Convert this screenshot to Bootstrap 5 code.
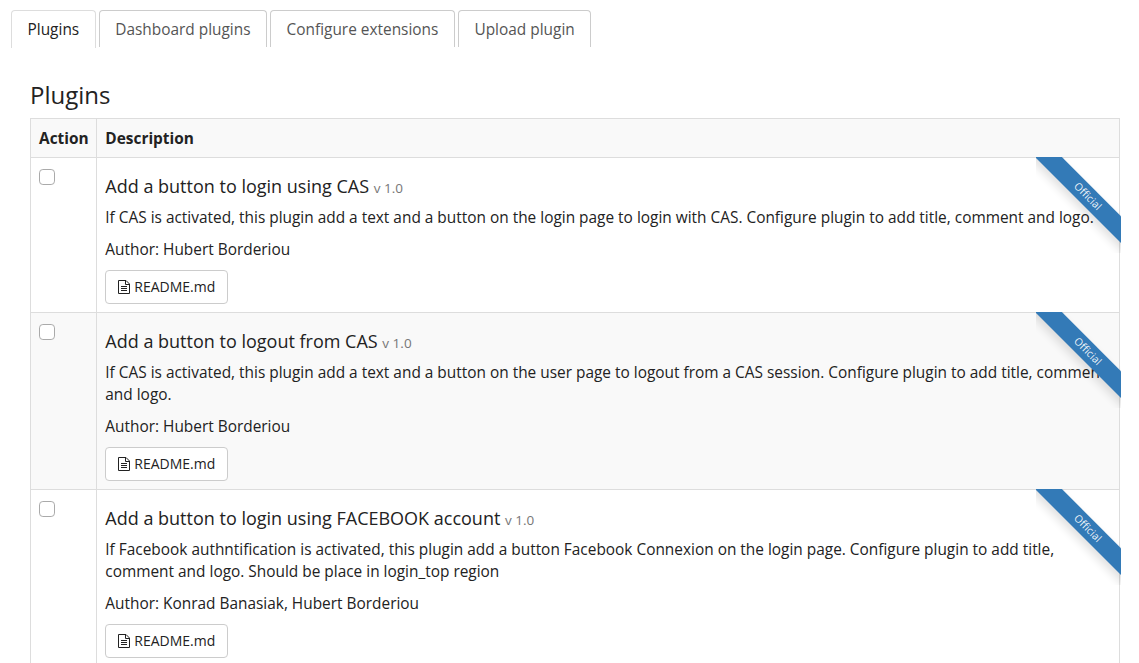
<!DOCTYPE html>
<html lang="en">
<head>
<meta charset="utf-8">
<title>Plugins</title>
<link href="https://cdn.jsdelivr.net/npm/bootstrap@5.3.0/dist/css/bootstrap.min.css" rel="stylesheet">
<style>
body{font:400 15.41px/22px "Open Sans","Noto Sans",sans-serif;color:#222;background:#fff;overflow:hidden}
.plugin-tabs{padding:10px 0 0 11px;gap:3px;border:0}
.plugin-tabs .nav-link,.plugin-tabs .nav-link:hover{margin:0;height:37px;padding:8px 15.53px 0;border:1px solid #ccc;border-bottom:0;border-radius:4px 4px 0 0;color:#555;line-height:22px;white-space:nowrap}
.plugin-tabs .nav-link.active{height:38px;color:#222;border-color:#ddd}
.page-body{padding:34px 19px 0 30px}
h3{font-size:24px;line-height:26px;margin:0 0 10px}
.plugin-table{width:1090px;table-layout:fixed;border-collapse:collapse;margin:0;color:#222;border-color:#ddd}
.plugin-table>:not(caption)>*>*{padding:8px;border:1px solid #ddd;background:#fff;box-shadow:none;vertical-align:top}
.plugin-table>:not(caption)>*>:last-child{padding-left:8.3px}
.plugin-table>thead>tr>th{padding-top:9px;padding-bottom:7px}
.plugin-table>thead>tr>th,.plugin-table>tbody>tr:nth-child(even)>td{background:#f9f9f9}
.plugin-table .action-col{width:66px}
.plugin-table h4{font-size:18px;height:20px;line-height:20px;margin:10px 0}
.plugin-table h4 small{font-size:13.5px;line-height:1;color:#777}
.plugin-table p{margin:0 0 9px;padding-top:1px}
.form-check-input{display:block;width:16px;height:16px;margin:3px 0 0;border:1px solid #aaa;border-radius:3px}
.readme-btn,.readme-btn:hover{display:inline-flex;align-items:center;gap:4px;height:34px;padding:0 12px;border:1px solid #ccc;border-radius:4px;background:#fff;color:#222;font-size:14px;line-height:20px;vertical-align:top}
.ribbon-box{top:-1px;right:-2px;width:85px;height:96px;overflow:hidden}
.ribbon-band{position:absolute;left:-24px;top:27px;width:146px;height:18.6px;line-height:18px;padding-left:8px;transform:rotate(45deg);background:#337ab7;color:rgba(255,255,255,.9);font-size:10.5px;text-align:center;box-shadow:0 5px 10px rgba(0,0,0,.12)}
</style>
</head>
<body>
<ul class="nav nav-tabs plugin-tabs align-items-start">
<li class="nav-item"><a class="nav-link active">Plugins</a></li>
<li class="nav-item"><a class="nav-link">Dashboard plugins</a></li>
<li class="nav-item"><a class="nav-link">Configure extensions</a></li>
<li class="nav-item"><a class="nav-link">Upload plugin</a></li>
</ul>
<svg class="d-none"><symbol id="file" viewBox="0 0 12 14"><path d="M.5.5H8L11.5 4v9.5H.5z M7.5.5V4.5H11.5 M3 6.5h6M3 8.5h6M3 10.5h6" fill="none" stroke="#222"/></symbol></svg>
<main class="page-body">
<h3 class="fw-normal">Plugins</h3>
<table class="table plugin-table">
<colgroup><col class="action-col"><col></colgroup>
<thead><tr><th>Action</th><th>Description</th></tr></thead>
<tbody>
<tr><td><input class="form-check-input" type="checkbox"></td><td class="position-relative">
<h4 class="fw-normal">Add a button to login using CAS <small>v 1.0</small></h4>
<p>If CAS is activated, this plugin add a text and a button on the login page to login with CAS. Configure plugin to add title, comment and logo.</p>
<p>Author: Hubert Borderiou</p>
<a class="btn readme-btn"><svg width="12" height="14"><use href="#file"/></svg>README.md</a>
<div class="ribbon-box position-absolute"><div class="ribbon-band">Official</div></div></td></tr>
<tr><td><input class="form-check-input" type="checkbox"></td><td class="position-relative">
<h4 class="fw-normal">Add a button to logout from CAS <small>v 1.0</small></h4>
<p>If CAS is activated, this plugin add a text and a button on the user page to logout from a CAS session. Configure plugin to add title, comment and logo.</p>
<p>Author: Hubert Borderiou</p>
<a class="btn readme-btn"><svg width="12" height="14"><use href="#file"/></svg>README.md</a>
<div class="ribbon-box position-absolute"><div class="ribbon-band">Official</div></div></td></tr>
<tr><td><input class="form-check-input" type="checkbox"></td><td class="position-relative">
<h4 class="fw-normal">Add a button to login using FACEBOOK account <small>v 1.0</small></h4>
<p>If Facebook authntification is activated, this plugin add a button Facebook Connexion on the login page. Configure plugin to add title, comment and logo. Should be place in login_top region</p>
<p>Author: Konrad Banasiak, Hubert Borderiou</p>
<a class="btn readme-btn"><svg width="12" height="14"><use href="#file"/></svg>README.md</a>
<div class="ribbon-box position-absolute"><div class="ribbon-band">Official</div></div></td></tr>
</tbody></table>
</main>
<script src="https://cdn.jsdelivr.net/npm/bootstrap@5.3.0/dist/js/bootstrap.bundle.min.js"></script>
</body>
</html>
